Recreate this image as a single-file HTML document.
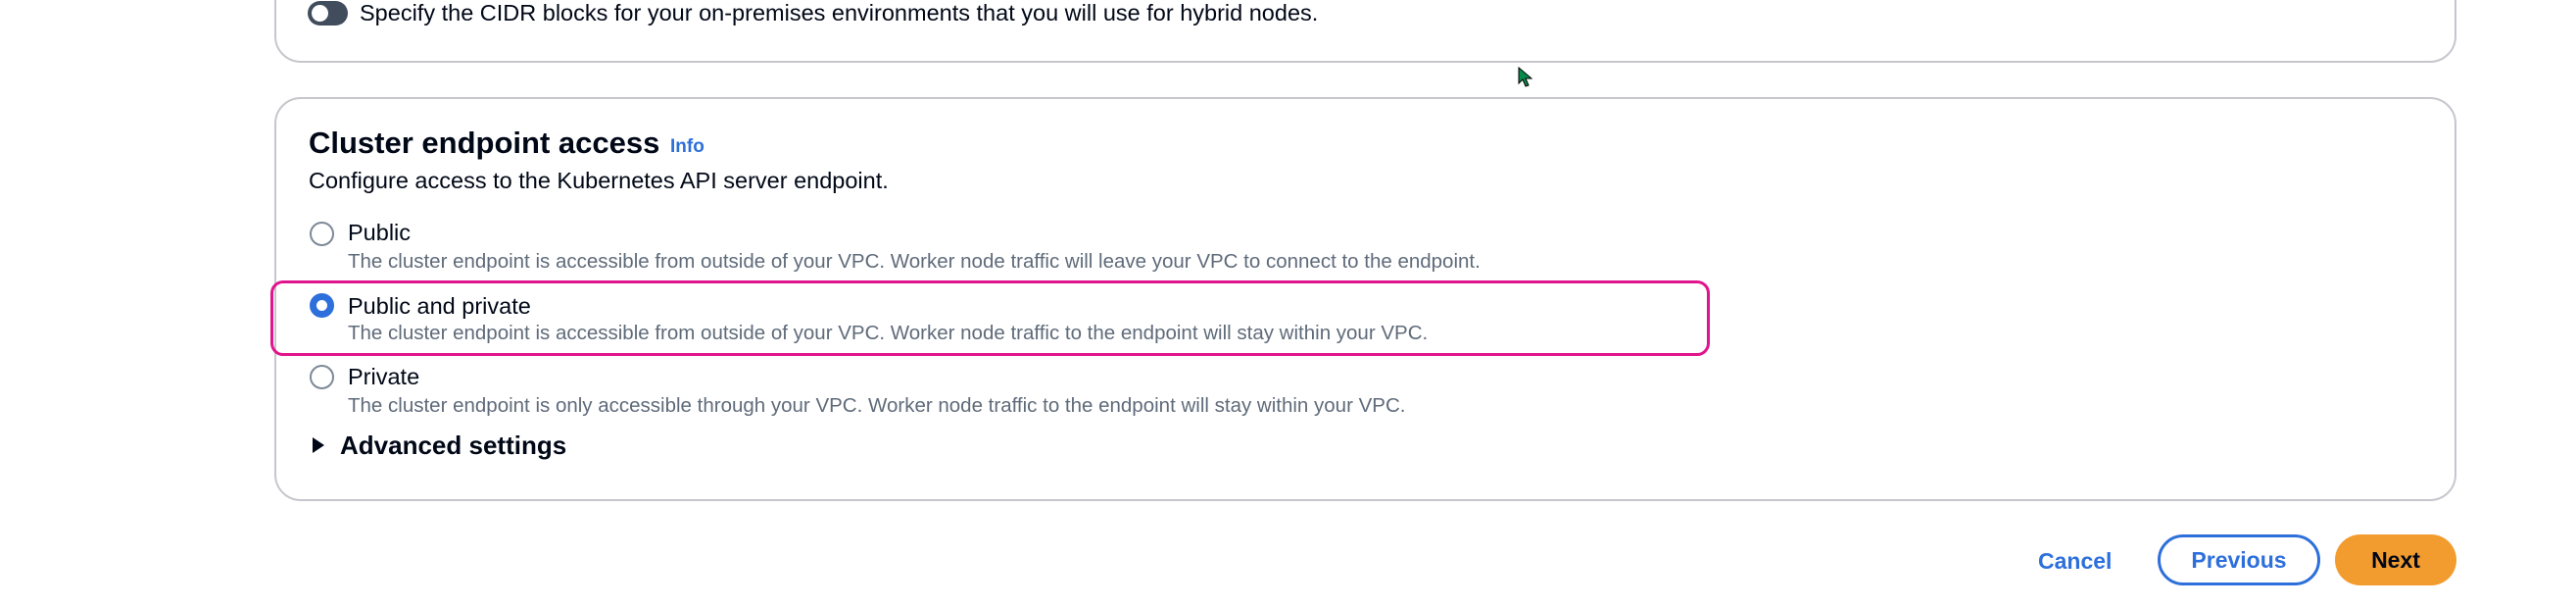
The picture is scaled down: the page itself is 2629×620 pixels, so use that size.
<!DOCTYPE html>
<html><head><meta charset="utf-8"><style>
*{margin:0;padding:0;box-sizing:border-box}
body{width:2629px;height:620px;background:#fff;position:relative;overflow:hidden;font-family:"Liberation Sans",sans-serif;color:#000716}
.abs{position:absolute;white-space:nowrap}
.card{position:absolute;left:280px;width:2227px;border:2px solid #c6c6cd;border-radius:27px;background:#fff}
.radio{position:absolute;width:25px;height:25px;border-radius:50%;border:2px solid #7d8998;background:#fff}
.lbl{font-size:23.5px;line-height:28px}
.desc{font-size:20.5px;color:#5f6b7a;line-height:24px}
</style></head><body>
<div class="card" style="top:-30px;height:94px"></div>
<div class="abs" style="left:314px;top:1px;width:41px;height:25px;border-radius:13px;background:#414d5c"></div>
<div class="abs" style="left:318px;top:5px;width:17px;height:17px;border-radius:50%;background:#fff"></div>
<div class="abs lbl" style="left:367px;top:-1px">Specify the CIDR blocks for your on-premises environments that you will use for hybrid nodes.</div>

<div class="card" style="top:99px;height:412px"></div>
<div class="abs" style="left:315px;top:128px;font-size:31px;font-weight:bold;line-height:36px">Cluster endpoint access</div>
<div class="abs" style="left:684px;top:138px;font-size:19px;font-weight:bold;color:#2d6fdb;line-height:24px">Info</div>
<div class="abs lbl" style="left:315px;top:170px">Configure access to the Kubernetes API server endpoint.</div>

<div class="radio" style="left:316px;top:226px"></div>
<div class="abs lbl" style="left:355px;top:223px">Public</div>
<div class="abs desc" style="left:355px;top:255px">The cluster endpoint is accessible from outside of your VPC. Worker node traffic will leave your VPC to connect to the endpoint.</div>

<div class="abs" style="left:276px;top:286px;width:1469px;height:77px;border:3px solid #e0148c;border-radius:13px"></div>
<div class="radio" style="left:316px;top:299px;border:7px solid #2d6fdb"></div>
<div class="abs lbl" style="left:355px;top:298px">Public and private</div>
<div class="abs desc" style="left:355px;top:328px">The cluster endpoint is accessible from outside of your VPC. Worker node traffic to the endpoint will stay within your VPC.</div>

<div class="radio" style="left:316px;top:372px"></div>
<div class="abs lbl" style="left:355px;top:370px">Private</div>
<div class="abs desc" style="left:355px;top:402px">The cluster endpoint is only accessible through your VPC. Worker node traffic to the endpoint will stay within your VPC.</div>

<svg class="abs" style="left:318px;top:445px" width="14" height="18"><path d="M1 1 L13 9 L1 17Z" fill="#000716"/></svg>
<div class="abs" style="left:347px;top:439px;font-size:26px;font-weight:bold;line-height:30px">Advanced settings</div>

<div class="abs" style="left:2080px;top:558px;font-size:23px;font-weight:bold;color:#2d6fdb;line-height:28px">Cancel</div>
<div class="abs" style="left:2202px;top:545px;width:166px;height:52px;border:3px solid #2d6fdb;border-radius:26px;text-align:center;font-size:23px;font-weight:bold;color:#2d6fdb;line-height:46px">Previous</div>
<div class="abs" style="left:2383px;top:545px;width:124px;height:52px;background:#f29b2e;border-radius:26px;text-align:center;font-size:23px;font-weight:bold;color:#000716;line-height:52px">Next</div>

<svg class="abs" style="left:1549px;top:68px" width="16" height="22"><path d="M1 1 L1 17 L5 13 L8 20 L11 19 L8 12 L14 12 Z" fill="#0a8a4a" stroke="#000" stroke-width="1"/></svg>
</body></html>
